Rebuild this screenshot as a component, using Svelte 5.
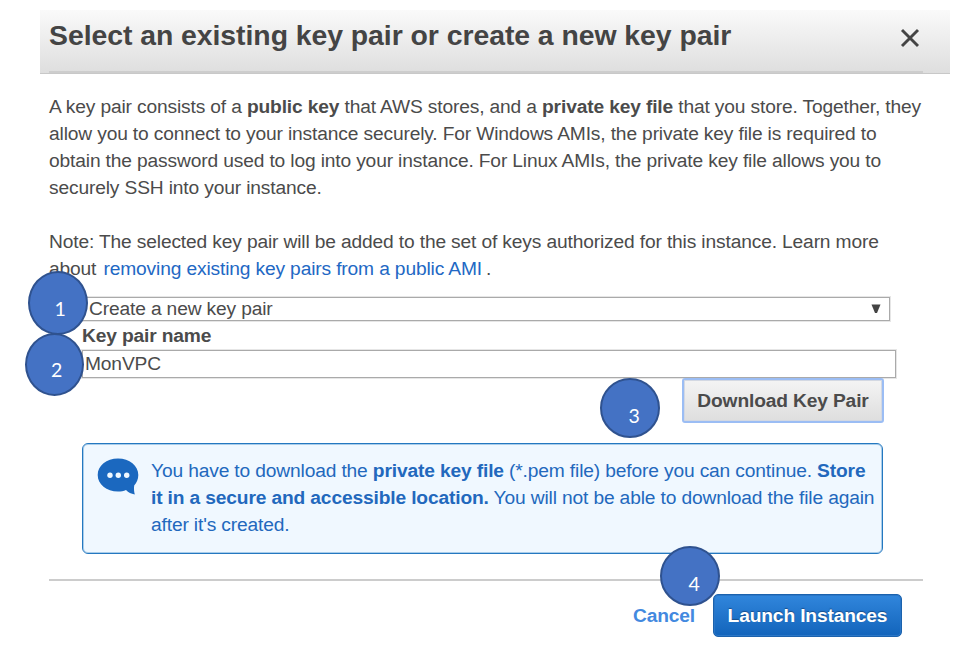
<script>
  const markers = [
    { n: 1, x: 28, y: 271, w: 60, h: 64, tx: 2, ty: 11 },
    { n: 2, x: 25, y: 333, w: 59, h: 63, tx: 2, ty: 11 },
    { n: 3, x: 600, y: 378, w: 60, h: 60, tx: 4, ty: 15 },
    { n: 4, x: 660, y: 546, w: 60, h: 60, tx: 4, ty: 15 }
  ];
</script>

<div class="dialog">
  <header>
    <h1>Select an existing key pair or create a new key pair</h1>
    <svg class="close" width="20" height="20" viewBox="0 0 20 20"><path d="M2 2 18 18M18 2 2 18" /></svg>
    <div class="rule"></div>
  </header>

  <main>
    <p>
      A key pair consists of a <b>public key</b> that AWS stores, and a <b>private key file</b> that you store. Together, they<br />
      allow you to connect to your instance securely. For Windows AMIs, the private key file is required to<br />
      obtain the password used to log into your instance. For Linux AMIs, the private key file allows you to<br />
      securely SSH into your instance.
    </p>
    <p>
      Note: The selected key pair will be added to the set of keys authorized for this instance. Learn more<br />
      about <a href="#ami">removing existing key pairs from a public AMI</a>.
    </p>

    <div class="form">
      <div class="select">
        <span>Create a new key pair</span>
        <svg width="10" height="10" viewBox="0 0 10 10"><path d="M.5 .5h9L6 9H4z" /></svg>
      </div>
      <div class="label">Key pair name</div>
      <div class="field">MonVPC</div>
      <button class="download">Download Key Pair</button>
      <div class="info">
        <svg width="42" height="38" viewBox="0 0 42 38">
          <path d="M21 .5C9.500.5.7 7.700.7 17S9.500 33.500 21 33.500c3 0 5.700-.5 8-1.500 2.500 2.500 5 3.800 8.800 4.500-.8-3-1-6-.6-9 2.500-2.500 4.100-6.500 4.100-10.500C41.300 7.700 32.500.5 21 .5z" />
          <circle cx="13" cy="17.300" r="2.700" /><circle cx="21.300" cy="17.300" r="2.700" /><circle cx="29.700" cy="17.300" r="2.700" />
        </svg>
        <div>
          You have to download the <b>private key file</b> (*.pem file) before you can continue. <b>Store</b><br />
          <b>it in a secure and accessible location.</b> You will not be able to download the file again<br />
          after it's created.
        </div>
      </div>
    </div>
  </main>

  <footer>
    <button class="cancel">Cancel</button>
    <button class="launch">Launch Instances</button>
  </footer>

  {#each markers as m}
    <div class="marker" style="left:{m.x}px;top:{m.y}px;width:{m.w}px;height:{m.h}px;padding:{m.ty}px 0 0 {m.tx * 2}px">{m.n}</div>
  {/each}
</div>

<style>
  :global(body) { background: #fff; }
  .dialog {
    position: relative; box-sizing: border-box; width: 967px; height: 671px; padding-top: 10px; overflow: hidden;
    font: 19.2px/27px 'Liberation Sans', Arial, sans-serif; letter-spacing: -0.145px; color: #4b4b4b;
  }
  header {
    display: flex; justify-content: space-between; align-items: flex-start; position: relative; box-sizing: border-box;
    width: 910px; height: 64px; margin-left: 40px; padding: 9px 30px 0 9px;
    background: linear-gradient(#fafafa, #dedede); border-bottom: 1px solid #c8c8c8;
  }
  h1 { margin: 0; font-size: 28.4px; line-height: 33px; letter-spacing: -0.05px; color: #444; white-space: nowrap; }
  .close { margin-top: 9px; fill: none; stroke: #444; stroke-width: 2.9; }
  .rule { position: absolute; left: 9px; right: 27px; bottom: 0; height: 2px; background: #cdcdcd; }
  main { padding: 19px 44px 0 49px; }
  p { margin: 0 0 27px; white-space: nowrap; }
  a { color: #2268c4; text-decoration: none; margin: 0 4px 0 2px; }
  .form { margin: -12px 0 0 33px; }
  .select {
    display: flex; align-items: center; justify-content: space-between; box-sizing: border-box; width: 808px; height: 24px;
    padding: 0 8px 0 6px; border: 1px solid #aaa; box-shadow: 0 0 0 1px #e6e6e6;
  }
  .select span { line-height: 22px; }
  .select svg { fill: #444; }
  .label { height: 29px; line-height: 30px; font-weight: bold; }
  .field {
    box-sizing: border-box; width: 814px; height: 28px; padding-left: 2px; line-height: 26px;
    border: 1px solid #aaa; box-shadow: 0 0 0 1px #e6e6e6;
  }
  button { font: inherit; font-weight: bold; letter-spacing: inherit; white-space: nowrap; margin: 0; padding: 0; }
  .download {
    position: relative; display: block; box-sizing: border-box; width: 202px; height: 45px; margin-left: 600px; color: #4b4b4b;
    background: linear-gradient(#f4f4f4, #dedede); border: 2px solid #9bbdf4; border-radius: 3px; box-shadow: inset 0 0 0 1px #d3d8e2;
  }
  .info {
    display: flex; gap: 12px; box-sizing: border-box; width: 801px; height: 111px; margin-top: 20px; padding: 13px 0 0 14px;
    color: #2268bd; background: #f0f8ff; border: 1px solid #2478c0; border-radius: 6px; box-shadow: inset 0 0 0 1px #a9cdea; white-space: nowrap;
  }
  .info svg { flex: none; margin-top: 1px; fill: #1b68bf; }
  .info circle { fill: #f0f8ff; }
  footer {
    display: flex; justify-content: flex-end; gap: 18px; box-sizing: border-box; width: 874px; margin: 25px 0 0 49px;
    padding: 13px 21px 0 0; border-top: 2px solid #ccc;
  }
  .cancel { border: 0; background: none; color: #4389df; height: 43px; }
  .launch {
    box-sizing: border-box; width: 189px; height: 43px; color: #fff; background: linear-gradient(#3186dc, #1264bb);
    border: 1px solid #1b62ad; border-radius: 5px; text-shadow: 0 -1px 1px #1b4f8a; box-shadow: inset 0 0 0 1px #2a76c7;
  }
  .marker {
    position: absolute; display: flex; align-items: center; justify-content: center; box-sizing: border-box;
    border: 2px solid #2f528f; border-radius: 50%; background: #4472c4; color: #fff; font: 19.5px/20px Lato, sans-serif;
  }
</style>
